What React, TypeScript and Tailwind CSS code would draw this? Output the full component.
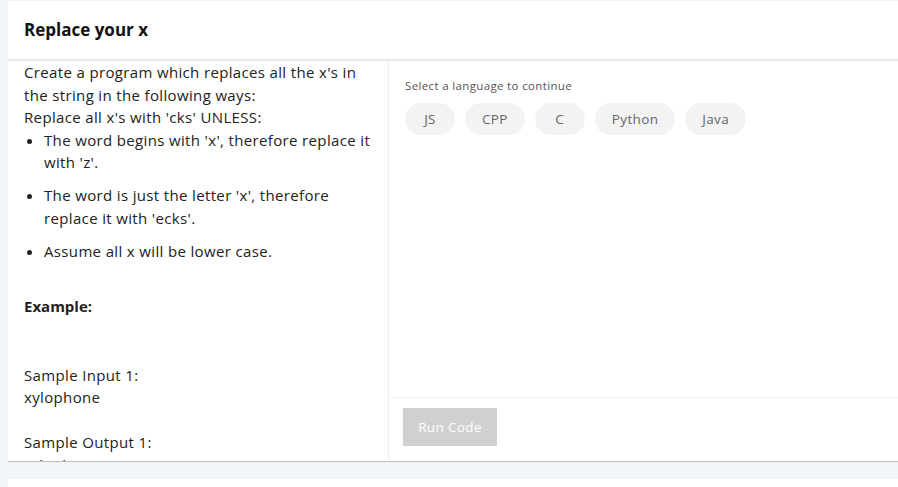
const langs = ['JS', 'CPP', 'C', 'Python', 'Java'];

export default function App() {
  return (
    <div className="h-[487px] w-[898px] overflow-hidden bg-[#f3f6f9] pt-px pl-2 text-[#222] tracking-[0.35px] [font-family:'Open_Sans',sans-serif]">
      <div className="flex h-[461px] flex-col bg-white border-b border-[#bdbdbd]">
        <div className="flex h-[60px] shrink-0 items-center border-b-2 border-[#e5e9ed] px-4">
          <h1 className="text-[17px] font-bold tracking-normal text-[#111]">Replace your x</h1>
        </div>
        <div className="flex min-h-0 flex-1">
          <div className="w-[381px] shrink-0 overflow-hidden border-r border-[#e8edf2] px-4 text-[15px] leading-[22.5px]">
            <p>Create a program which replaces all the x's in the string in the following ways:</p>
            <p>Replace all x's with 'cks' UNLESS:</p>
            <ul className="list-disc pl-5">
              <li className="mb-[10.5px]">The word begins with 'x', therefore replace it with 'z'.</li>
              <li className="mb-[10.5px]">The word is just the letter 'x', therefore replace it with 'ecks'.</li>
              <li>Assume all x will be lower case.</li>
            </ul>
            <h3 className="mt-[33px] font-bold tracking-normal">Example:</h3>
            <p className="mt-[46px]">Sample Input 1:</p>
            <p>xylophone</p>
            <p className="mt-[22.5px]">Sample Output 1:</p>
            <p>zylophone</p>
          </div>
          <div className="flex min-w-0 flex-1 flex-col">
            <div className="flex-1 px-4 pt-4">
              <p className="text-[11.5px] text-[#555]">Select a language to continue</p>
              <div className="mt-[9px] flex gap-2.5">
                {langs.map((l) => (
                  <button
                    key={l}
                    className="h-8 min-w-[50px] rounded-full bg-[#f3f3f3] px-[17px] text-[13.5px] text-[#666]"
                  >
                    {l}
                  </button>
                ))}
              </div>
            </div>
            <div className="h-[64px] shrink-0 border-t border-[#eef1f4] px-3.5 pt-2.5">
              <button className="h-[38px] w-[94px] bg-[#d0d0d0] text-[13.5px] text-white">Run Code</button>
            </div>
          </div>
        </div>
      </div>
      <div className="mt-[17px] h-20 bg-white" />
    </div>
  );
}
